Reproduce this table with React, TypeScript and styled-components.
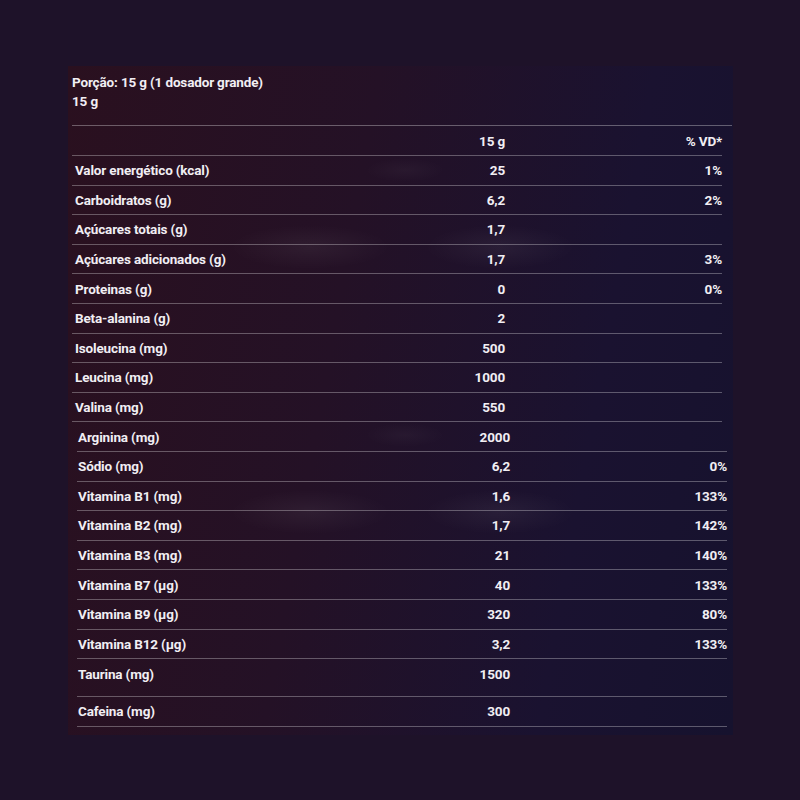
import React, { FC } from "react";
import styled, { createGlobalStyle } from "styled-components";

//nutrition data
type Row = { label: string; value: string; vd?: string; tall?: boolean };

const mainRows: Row[] = [
  { label: "Valor energético (kcal)", value: "25", vd: "1%" },
  { label: "Carboidratos (g)", value: "6,2", vd: "2%" },
  { label: "Açúcares totais (g)", value: "1,7" },
  { label: "Açúcares adicionados (g)", value: "1,7", vd: "3%" },
  { label: "Proteinas (g)", value: "0", vd: "0%" },
  { label: "Beta-alanina (g)", value: "2" },
  { label: "Isoleucina (mg)", value: "500" },
  { label: "Leucina (mg)", value: "1000" },
  { label: "Valina (mg)", value: "550" },
];

const extraRows: Row[] = [
  { label: "Arginina (mg)", value: "2000" },
  { label: "Sódio (mg)", value: "6,2", vd: "0%" },
  { label: "Vitamina B1 (mg)", value: "1,6", vd: "133%" },
  { label: "Vitamina B2 (mg)", value: "1,7", vd: "142%" },
  { label: "Vitamina B3 (mg)", value: "21", vd: "140%" },
  { label: "Vitamina B7 (µg)", value: "40", vd: "133%" },
  { label: "Vitamina B9 (µg)", value: "320", vd: "80%" },
  { label: "Vitamina B12 (µg)", value: "3,2", vd: "133%" },
  { label: "Taurina (mg)", value: "1500", tall: true },
  { label: "Cafeina (mg)", value: "300" },
];

const App: FC = () => {
  return (
    <>
      <GlobalStyle />
      <Page>
        <Panel>
          <Serving>
            <div>Porção: 15 g (1 dosador grande)</div>
            <div>15 g</div>
          </Serving>
          <TopRule />
          <Table>
            <HeadRow>
              <Cell />
              <Cell $align="right">15 g</Cell>
              <Cell $align="right">% VD*</Cell>
            </HeadRow>
            {mainRows.map((r) => (
              <DataRow key={r.label}>
                <Cell $pad={3}>{r.label}</Cell>
                <Cell $align="right">{r.value}</Cell>
                <Cell $align="right">{r.vd}</Cell>
              </DataRow>
            ))}
          </Table>
          <Table $shift={5}>
            {extraRows.map((r) => (
              <DataRow key={r.label} $tall={r.tall}>
                <Cell $pad={1}>{r.label}</Cell>
                <Cell $align="right">{r.value}</Cell>
                <Cell $align="right">{r.vd}</Cell>
              </DataRow>
            ))}
          </Table>
        </Panel>
      </Page>
    </>
  );
};

const GlobalStyle = createGlobalStyle`
  html, body {
    margin: 0;
    padding: 0;
    background: #1e1229;
  }
  body {
    font-family: Roboto, "Liberation Sans", sans-serif;
  }
`;

const Page = styled.div`
  width: 800px;
  height: 800px;
  background: #1e1229;
  padding: 66px 0 0 68px;
  box-sizing: border-box;
`;

const Panel = styled.div`
  width: 665px;
  height: 669px;
  box-sizing: border-box;
  padding: 7px 0 0 4px;
  color: #f1eef3;
  font-size: 13.5px;
  font-weight: 700;
  letter-spacing: -0.15px;
  background:
    radial-gradient(80px 22px at 242px 181px, rgba(255, 255, 255, 0.05), transparent),
    radial-gradient(75px 22px at 432px 181px, rgba(255, 255, 255, 0.05), transparent),
    radial-gradient(40px 12px at 337px 104px, rgba(255, 255, 255, 0.03), transparent),
    radial-gradient(80px 22px at 242px 446px, rgba(255, 255, 255, 0.05), transparent),
    radial-gradient(75px 22px at 432px 446px, rgba(255, 255, 255, 0.05), transparent),
    radial-gradient(40px 12px at 337px 369px, rgba(255, 255, 255, 0.03), transparent),
    linear-gradient(100deg, #2a101f 0%, #241126 40%, #1a1230 75%, #16122e 100%);
`;

const Serving = styled.div`
  line-height: 19px;
  margin-bottom: 14px;
`;

const TopRule = styled.div`
  width: 660px;
  height: 1px;
  background: rgba(255, 255, 255, 0.32);
`;

const Table = styled.div<{ $shift?: number }>`
  width: 650px;
  margin-left: ${(p) => p.$shift || 0}px;
  display: flex;
  flex-direction: column;
`;

const HeadRow = styled.div`
  display: grid;
  grid-template-columns: 308px 125px 217px;
  align-items: center;
  height: 29px;
  border-bottom: 1px solid rgba(255, 255, 255, 0.3);
`;

const DataRow = styled.div<{ $tall?: boolean }>`
  display: grid;
  grid-template-columns: 308px 125px 217px;
  align-items: ${(p) => (p.$tall ? "start" : "center")};
  height: ${(p) => (p.$tall ? "30px" : "28.6px")};
  padding-top: ${(p) => (p.$tall ? "7px" : "0")};
  border-bottom: 1px solid rgba(255, 255, 255, 0.3);
`;

const Cell = styled.div<{ $align?: "left" | "right"; $pad?: number }>`
  text-align: ${(p) => p.$align || "left"};
  padding-left: ${(p) => p.$pad || 0}px;
  white-space: nowrap;
`;

export default App;
